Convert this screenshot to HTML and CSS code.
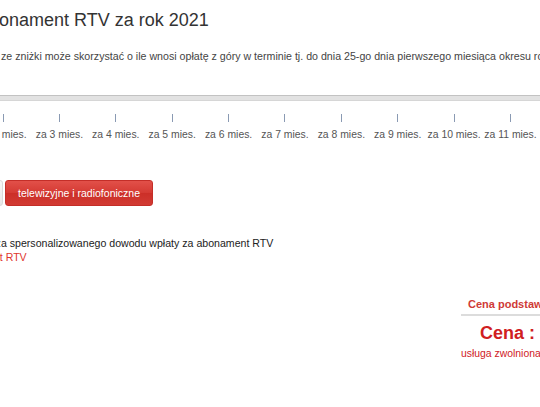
FILE: index.html
```html
<!DOCTYPE html>
<html lang="pl">
<head>
<meta charset="utf-8">
<link rel="stylesheet" href="styles.css">
</head>
<body>
<div class="page">
  <h1 class="title">Abonament RTV za rok 2021</h1>
  <p class="desc">ze zniżki może skorzystać o ile wnosi opłatę z góry w terminie tj. do dnia 25-go dnia pierwszego miesiąca okresu rozliczeniowego.</p>
  <div class="slider">
    <div class="track"></div>
    <div class="scale">
      <div class="cell"><span class="tick"></span><span class="lbl">za 2 mies.</span></div>
      <div class="cell"><span class="tick"></span><span class="lbl">za 3 mies.</span></div>
      <div class="cell"><span class="tick"></span><span class="lbl">za 4 mies.</span></div>
      <div class="cell"><span class="tick"></span><span class="lbl">za 5 mies.</span></div>
      <div class="cell"><span class="tick"></span><span class="lbl">za 6 mies.</span></div>
      <div class="cell"><span class="tick"></span><span class="lbl">za 7 mies.</span></div>
      <div class="cell"><span class="tick"></span><span class="lbl">za 8 mies.</span></div>
      <div class="cell"><span class="tick"></span><span class="lbl">za 9 mies.</span></div>
      <div class="cell"><span class="tick"></span><span class="lbl">za 10 mies.</span></div>
      <div class="cell"><span class="tick"></span><span class="lbl">za 11 mies.</span></div>
      <div class="cell"><span class="tick tick-red"></span><span class="lbl">za 12 mies.</span></div>
    </div>
  </div>
  <div class="buttons">
    <button class="btn btn-gray">radiofoniczne</button>
    <button class="btn btn-red">telewizyjne i radiofoniczne</button>
  </div>
  <div class="info">
    <p class="info-line">Zamów wysyłkę na adres e-mail lub pobierz plik pdf z wydrukiem formularza spersonalizowanego dowodu wpłaty za abonament RTV</p>
    <p class="info-link"><a href="#">Formularz wpłaty za abonament RTV</a></p>
  </div>
  <div class="price">
    <div class="price-head">Cena podstawowa</div>
    <div class="price-main">Cena : 0,00 zł</div>
    <div class="price-note">usługa zwolniona z VAT</div>
  </div>
</div>
</body>
</html>
```
FILE: styles.css
```css
html, body {
  margin: 0;
  padding: 0;
  background: #fff;
  overflow: hidden;
}
body {
  width: 540px;
  height: 407px;
  font-family: "Liberation Sans", Arial, sans-serif;
  color: #333;
}
.page {
  width: 1000px;
}
.title {
  margin: 9px 0 0 -23px;
  font-size: 18px;
  font-weight: normal;
  line-height: 22px;
  color: #333;
  white-space: nowrap;
}
.desc {
  margin: 19px 0 0 1px;
  font-size: 10.65px;
  line-height: 13px;
  color: #444;
  white-space: nowrap;
}
.slider {
  margin-top: 32px;
}
.track {
  height: 4px;
  width: 560px;
  margin-left: -10px;
  background: #e2e2e2;
  border-top: 1px solid #c2c2c2;
  border-bottom: 1px solid #d6d6d6;
}
.scale {
  display: flex;
  margin: 13px 0 0 -25.2px;
}
.cell {
  flex: 0 0 56.4px;
  display: flex;
  flex-direction: column;
  align-items: center;
}
.tick {
  width: 1px;
  height: 8px;
  background: #8a9ab3;
}
.tick-red {
  background: #c98a8a;
}
.lbl {
  margin-top: 6px;
  font-size: 10.4px;
  line-height: 13px;
  color: #555;
  white-space: nowrap;
}
.buttons {
  display: flex;
  gap: 2px;
  margin: 39px 0 0 -80px;
}
.btn {
  font-family: "Liberation Sans", Arial, sans-serif;
  font-size: 10.5px;
  height: 26px;
  padding: 0 12px;
  border-radius: 3px;
  cursor: pointer;
}
.btn-gray {
  width: 83px;
  text-align: left;
  padding-left: 4px;
  background: linear-gradient(#f7f7f7, #e8e8e8);
  border: 1px solid #dadada;
  color: #333;
  overflow: hidden;
  white-space: nowrap;
}
.btn-red {
  width: 148px;
  background: linear-gradient(#e25049, #d43a33 50%, #cc2f28 51%, #d23a33);
  border: 1px solid #c42e28;
  color: #fff;
}
.info {
  margin: 30px 0 0 -350px;
  font-size: 10.6px;
  line-height: 14px;
  white-space: nowrap;
}
.info p {
  margin: 0;
}
.info-line {
  color: #222;
}
.info-link {
  padding-left: 202px;
}
.info-link a {
  color: #e0352d;
  text-decoration: none;
}
.price {
  margin: 33px 0 0 461px;
  width: 160px;
  color: #cc2b2b;
}
.price-head {
  font-size: 11px;
  font-weight: bold;
  color: #cf3a36;
  line-height: 14px;
  padding: 0 0 3px 7px;
  border-bottom: 2px solid #dcdcdc;
}
.price-main {
  margin: 6px 0 3px;
  font-size: 18px;
  font-weight: bold;
  line-height: 22px;
  padding-left: 19px;
  color: #d0201f;
}
.price-note {
  font-size: 10.4px;
  line-height: 14px;
  color: #d0201f;
}
```
